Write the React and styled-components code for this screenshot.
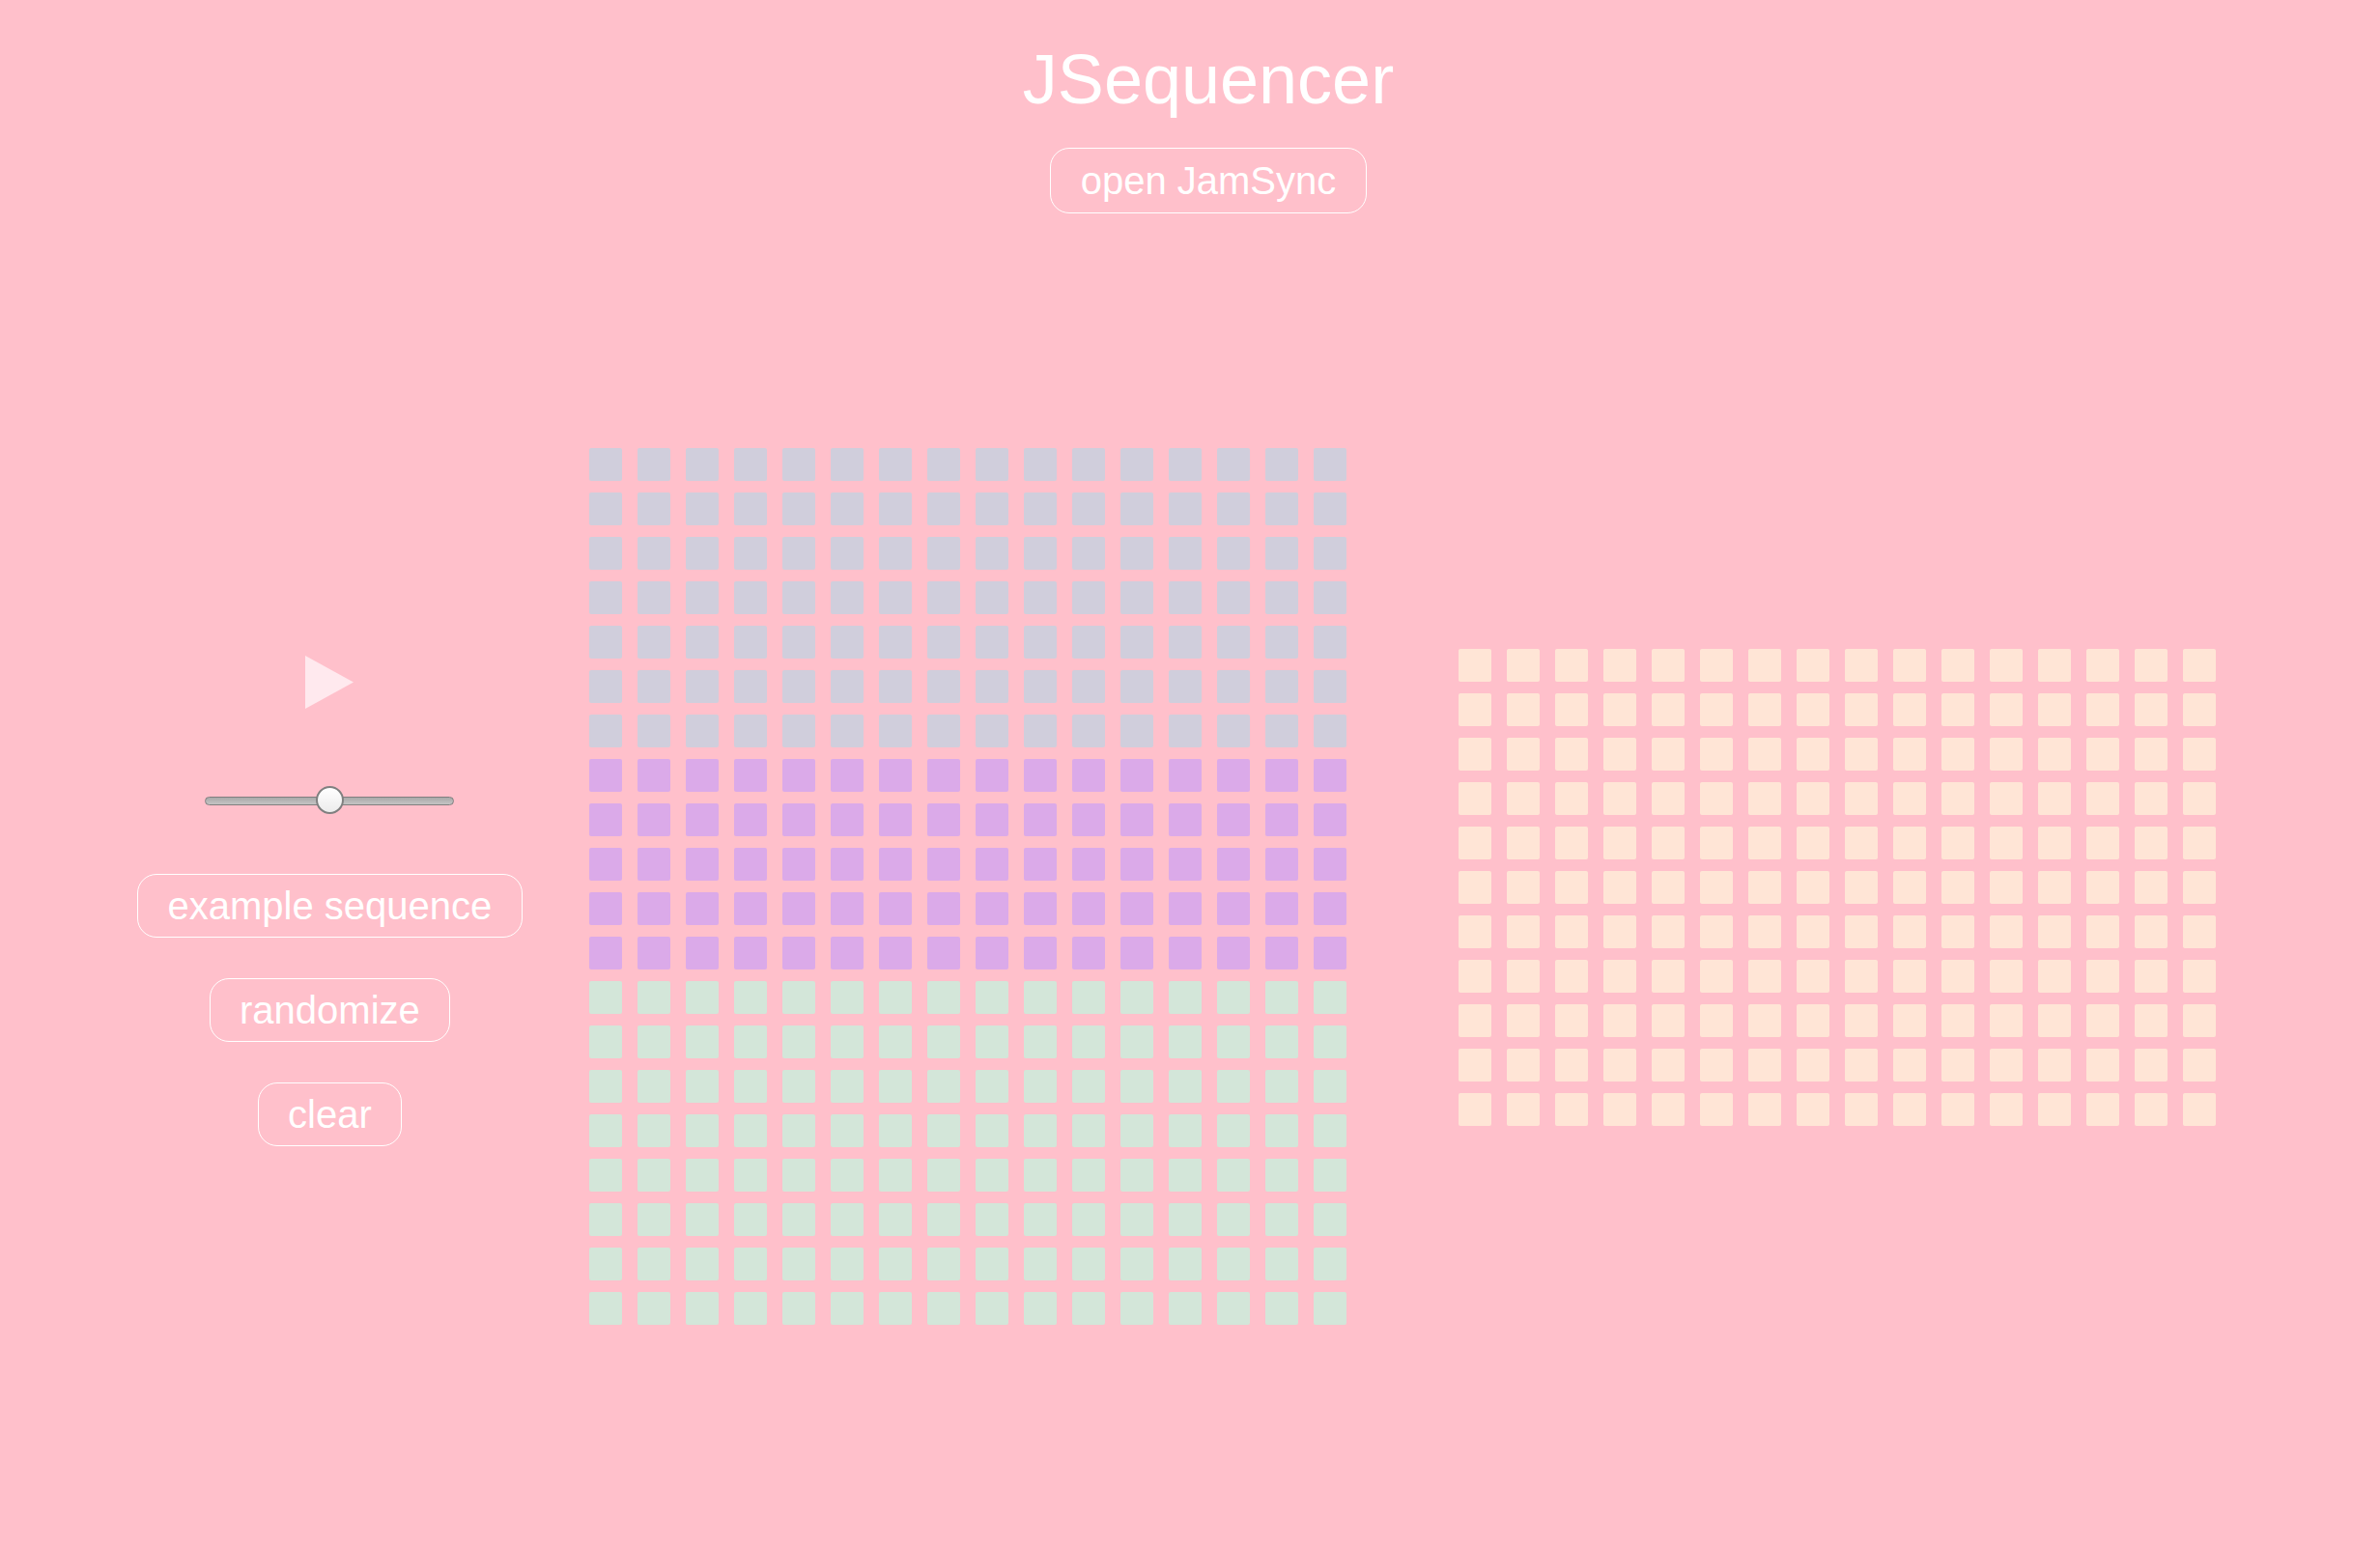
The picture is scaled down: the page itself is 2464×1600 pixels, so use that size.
import React from "react";
import styled, { createGlobalStyle } from "styled-components";

const GlobalStyle = createGlobalStyle`
  html, body {
    margin: 0;
    padding: 0;
    background-color: #ffc0cb;
  }

  body {
    font-family: "Liberation Sans", Arial, Helvetica, sans-serif;
    color: #ffffff;
  }
`;

const Page = styled.div`
  min-height: 1600px;
  background-color: #ffc0cb;
  box-sizing: border-box;
`;

const Header = styled.header`
  display: flex;
  flex-direction: column;
  align-items: center;
  padding-left: 38px;
  padding-top: 41px;
`;

const Title = styled.h1`
  margin: 0;
  font-size: 72px;
  font-weight: 400;
  line-height: 83px;
  color: #ffffff;
`;

const PillButton = styled.button`
  font-family: "Liberation Sans", Arial, Helvetica, sans-serif;
  font-size: 40px;
  line-height: 46px;
  color: #ffffff;
  background: transparent;
  border: 1.5px solid #ffffff;
  border-radius: 20px;
  box-sizing: border-box;
  height: ${({ $tall }) => ($tall ? 68 : 66)}px;
  padding: 0 30.5px;
  cursor: pointer;
  outline: none;
  margin-top: ${({ $top }) => $top || 0}px;
`;

const Main = styled.main`
  display: flex;
  align-items: flex-start;
  margin-top: 243px;
  padding-left: 142px;
`;

const Controls = styled.div`
  display: flex;
  flex-direction: column;
  align-items: center;
  margin-top: 215px;
  margin-right: 69px;
`;

const PlayButton = styled.div`
  width: 50px;
  height: 55px;
  cursor: pointer;

  svg {
    display: block;
  }
`;

const Slider = styled.input`
  -webkit-appearance: none;
  appearance: none;
  width: 258px;
  height: 30px;
  margin: 80px 0 0;
  background: transparent;

  &::-webkit-slider-runnable-track {
    height: 9px;
    border-radius: 5px;
    border: 1.5px solid #7f7f7f;
    background: linear-gradient(#a9a9a9, #c4c4c4);
    box-sizing: border-box;
  }

  &::-webkit-slider-thumb {
    -webkit-appearance: none;
    width: 29px;
    height: 29px;
    margin-top: -11.5px;
    border-radius: 50%;
    border: 2px solid #808080;
    background: linear-gradient(#ffffff, #ececec);
    box-sizing: border-box;
  }
`;

const Grid = styled.div`
  display: grid;
  grid-template-columns: repeat(16, 34px);
  column-gap: 16px;
  row-gap: 12px;
  margin-top: ${({ $top }) => $top || 0}px;
  margin-right: ${({ $gap }) => $gap || 0}px;
`;

const Cell = styled.div`
  width: 34px;
  height: 34px;
  border-radius: 2px;
  background-color: ${({ $color }) => $color};
`;

const GRAY = "#d0cedc";
const PURPLE = "#dbaae9";
const GREEN = "#d3e6d9";
const PEACH = "#ffe5d6";

const drumRows = [
  ...Array(7).fill(GRAY),
  ...Array(5).fill(PURPLE),
  ...Array(8).fill(GREEN),
];
const synthRows = Array(11).fill(PEACH);

function StepGrid({ rows, gap, top }) {
  return (
    <Grid $gap={gap} $top={top}>
      {rows.map((color, r) =>
        Array.from({ length: 16 }).map((_, c) => (
          <Cell key={`${r}-${c}`} $color={color} />
        ))
      )}
    </Grid>
  );
}

export default function App() {
  return (
    <Page>
      <GlobalStyle />
      <Header>
        <Title>JSequencer</Title>
        <PillButton $tall $top={29}>
          open JamSync
        </PillButton>
      </Header>
      <Main>
        <Controls>
          <PlayButton>
            <svg width="50" height="55" viewBox="0 0 50 55">
              <polygon points="0,0 50,27.5 0,55" fill="#ffe9ee" />
            </svg>
          </PlayButton>
          <Slider type="range" min="0" max="100" defaultValue="50" />
          <PillButton $top={61}>example sequence</PillButton>
          <PillButton $top={42}>randomize</PillButton>
          <PillButton $top={42}>clear</PillButton>
        </Controls>
        <StepGrid rows={drumRows} gap={116} />
        <StepGrid rows={synthRows} top={208} />
      </Main>
    </Page>
  );
}
